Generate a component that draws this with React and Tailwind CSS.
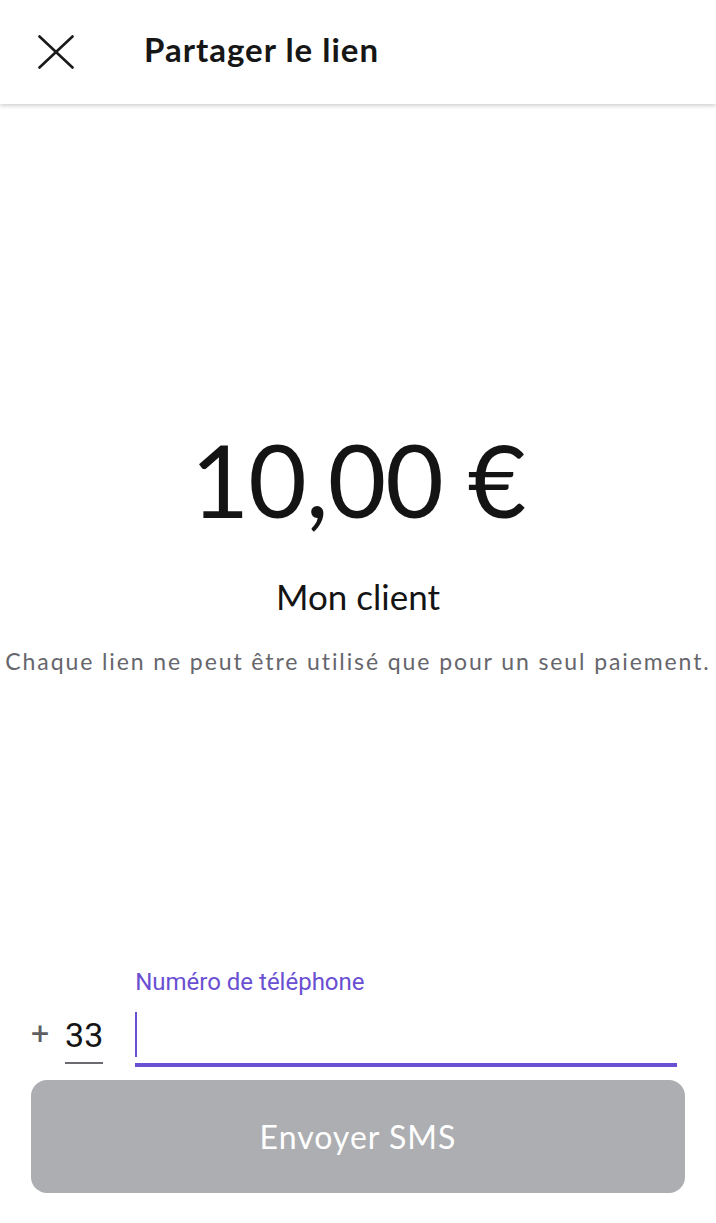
import React from "react";

export default function App() {
  return (
    <div className="w-[716px] h-[1223px] bg-white flex flex-col overflow-hidden" style={{ fontFamily: "Lato, 'Noto Sans', sans-serif" }}>
      <header className="h-[104px] shrink-0 flex items-center bg-white shadow-[0_2px_4px_rgba(0,0,0,0.18)] relative z-10">
        <button className="ml-[38px] w-[36px] h-[34px] flex items-center justify-center">
          <svg width="36" height="34" viewBox="0 0 36 34" fill="none" stroke="#1a1a1a" strokeWidth="2.6" strokeLinecap="round">
            <path d="M1.5 1.5 L34.5 32.5" />
            <path d="M34.5 1.5 L1.5 32.5" />
          </svg>
        </button>
        <h1 className="ml-[70px] text-[33px] font-bold text-[#161616] tracking-[1px] leading-none pb-[6px]">Partager le lien</h1>
      </header>

      <main className="flex-1 flex flex-col items-center">
        <div className="mt-[320px] text-[101px] leading-[110px] text-[#141414] tracking-[-1px]">10,00 €</div>
        <div className="mt-[42px] text-[35px] leading-[40px] text-[#141414]">Mon client</div>
        <p className="mt-[30px] text-[23px] leading-[30px] text-[#66666c] tracking-[1.9px] whitespace-nowrap">Chaque lien ne peut être utilisé que pour un seul paiement.</p>
      </main>

      <section className="shrink-0 px-[31px] pb-[30px]">
        <div className="flex items-end">
          <div className="flex items-end">
            <span className="text-[32px] leading-none text-[#5f5f63] mb-[18px]" style={{ fontFamily: "Roboto, sans-serif" }}>+</span>
            <div className="ml-[16px] w-[38px] flex flex-col items-center">
              <span className="text-[34px] leading-[40px] text-[#141414] mb-[7px]" style={{ fontFamily: "Roboto, sans-serif" }}>33</span>
              <div className="w-full h-[2px] bg-[#6b6b6f] mb-[3px]" />
            </div>
          </div>
          <div className="ml-[32px] flex-1 mr-[8px] flex flex-col">
            <label className="text-[24px] leading-[28px] text-[#6a4fd3]" style={{ fontFamily: "Roboto, sans-serif" }}>Numéro de téléphone</label>
            <div className="mt-[16px] h-[46px] flex items-stretch">
              <div className="w-[2px] h-[45px] bg-[#6a4fd3]" />
            </div>
            <div className="mt-[5px] h-[4px] bg-[#6a4fd3]" />
          </div>
        </div>
        <button className="mt-[13px] w-full h-[113px] rounded-[16px] bg-[#adaeb2] text-white text-[32px] tracking-[1px] flex items-center justify-center">
          Envoyer SMS
        </button>
      </section>
    </div>
  );
}
